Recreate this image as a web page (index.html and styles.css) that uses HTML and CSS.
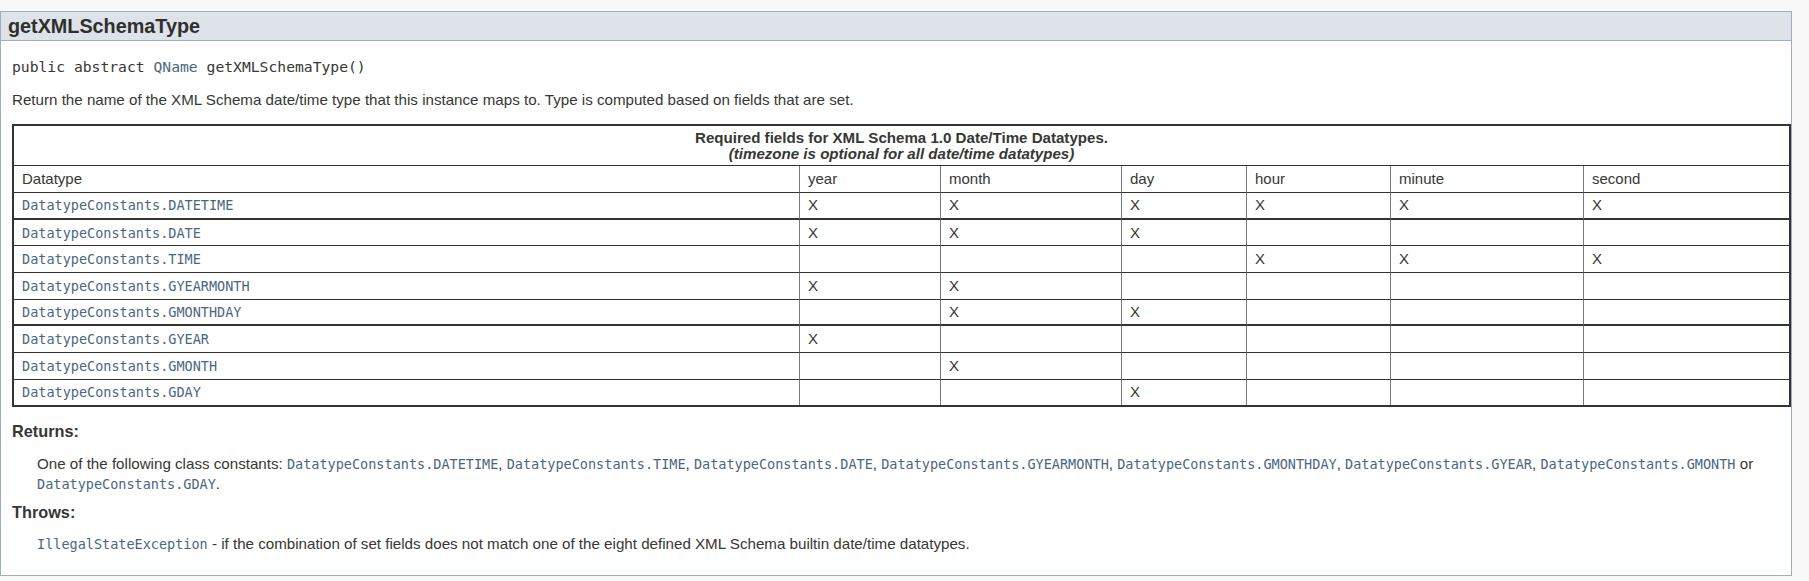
FILE: index.html
```html
<!DOCTYPE html>
<html>
<head>
<meta charset="utf-8">
<link rel="stylesheet" href="styles.css">
</head>
<body>
<div class="page">
  <section class="detail">
    <h3 class="title">getXMLSchemaType</h3>
    <div class="body">
      <div class="sig">public abstract <a class="link">QName</a> getXMLSchemaType()</div>
      <div class="desc">Return the name of the XML Schema date/time type that this instance maps to. Type is computed based on fields that are set.</div>
      <table class="req">
        <colgroup>
          <col class="c-type"><col class="c-year"><col class="c-month"><col class="c-day"><col class="c-hour"><col class="c-minute"><col class="c-second">
        </colgroup>
        <tr><th colspan="7" class="cap">Required fields for XML Schema 1.0 Date/Time Datatypes.<br><i>(timezone is optional for all date/time datatypes)</i></th></tr>
        <tr><td>Datatype</td><td>year</td><td>month</td><td>day</td><td>hour</td><td>minute</td><td>second</td></tr>
        <tr class="thick"><td><code class="link">DatatypeConstants.DATETIME</code></td><td>X</td><td>X</td><td>X</td><td>X</td><td>X</td><td>X</td></tr>
        <tr><td><code class="link">DatatypeConstants.DATE</code></td><td>X</td><td>X</td><td>X</td><td></td><td></td><td></td></tr>
        <tr><td><code class="link">DatatypeConstants.TIME</code></td><td></td><td></td><td></td><td>X</td><td>X</td><td>X</td></tr>
        <tr><td><code class="link">DatatypeConstants.GYEARMONTH</code></td><td>X</td><td>X</td><td></td><td></td><td></td><td></td></tr>
        <tr class="thick"><td><code class="link">DatatypeConstants.GMONTHDAY</code></td><td></td><td>X</td><td>X</td><td></td><td></td><td></td></tr>
        <tr><td><code class="link">DatatypeConstants.GYEAR</code></td><td>X</td><td></td><td></td><td></td><td></td><td></td></tr>
        <tr><td><code class="link">DatatypeConstants.GMONTH</code></td><td></td><td>X</td><td></td><td></td><td></td><td></td></tr>
        <tr class="last"><td><code class="link">DatatypeConstants.GDAY</code></td><td></td><td></td><td>X</td><td></td><td></td><td></td></tr>
      </table>
      <dl class="notes">
        <dt class="first">Returns:</dt>
        <dd class="first">One of the following class constants: <code class="link">DatatypeConstants.DATETIME</code>, <code class="link">DatatypeConstants.TIME</code>, <code class="link">DatatypeConstants.DATE</code>, <code class="link">DatatypeConstants.GYEARMONTH</code>, <code class="link">DatatypeConstants.GMONTHDAY</code>, <code class="link">DatatypeConstants.GYEAR</code>, <code class="link">DatatypeConstants.GMONTH</code> or <code class="link">DatatypeConstants.GDAY</code>.</dd>
        <dt>Throws:</dt>
        <dd><code class="link">IllegalStateException</code> - if the combination of set fields does not match one of the eight defined XML Schema builtin date/time datatypes.</dd>
      </dl>
    </div>
  </section>
</div>
</body>
</html>
```

FILE: styles.css
```css
html, body {
  margin: 0;
  padding: 0;
}

body {
  background: #f8f8f8;
  font-family: "Liberation Sans", Arial, sans-serif;
  color: #353833;
}

.page {
  padding-top: 11px;
  width: 1792px;
}

.detail {
  border: 1px solid #9eadc0;
  background: #ffffff;
}

.title {
  margin: 0;
  height: 28px;
  line-height: 28px;
  padding-left: 7px;
  background: #dee3e9;
  border-bottom: 1px solid #9eadc0;
  font-size: 19.8px;
  font-weight: bold;
  color: #2f302d;
}

.body {
  padding: 0 0 20px 11px;
}

.link {
  color: #4a6782;
  text-decoration: none;
}

code {
  font-family: "DejaVu Sans Mono", monospace;
  font-size: 13.5px;
}

.sig {
  margin-top: 15.5px;
  font-family: "DejaVu Sans Mono", monospace;
  font-size: 14.7px;
  line-height: 20px;
}

.desc {
  margin-top: 13.2px;
  font-size: 15.15px;
  line-height: 20px;
}

.req {
  margin-top: 14.7px;
  width: 100%;
  table-layout: fixed;
  border-collapse: separate;
  border-spacing: 0;
  border: 2px solid #333333;
  font-size: 15px;
}

.c-type { width: 786px; }
.c-year { width: 141px; }
.c-month { width: 181px; }
.c-day { width: 125px; }
.c-hour { width: 144px; }
.c-minute { width: 193px; }

.req th.cap {
  padding: 3.5px 0 2.5px;
  line-height: 16.5px;
  text-align: center;
  font-weight: bold;
  font-size: 15.1px;
  border-bottom: 1px solid #333333;
}

.req td {
  padding: 0 8px;
  height: 25.67px;
  line-height: 18px;
  text-align: left;
  vertical-align: middle;
  white-space: nowrap;
  overflow: hidden;
  border-bottom: 1px solid #333333;
  border-right: 1px solid #7a7a7a;
}

.req td:last-child {
  border-right: 0;
}

.req tr.thick td {
  border-bottom-width: 2px;
  height: 24.67px;
}

.req tr.last td {
  border-bottom: 0;
}

.notes {
  margin: 14.2px 0 0 0;
}

.notes dt {
  margin-top: 6.8px;
  font-weight: bold;
  font-size: 16.3px;
  line-height: 20px;
}

.notes dt.first {
  margin-top: 0;
}

.notes dd {
  margin: 12.8px 0 0 25px;
  font-size: 15.15px;
  line-height: 19.4px;
}

.notes dd.first {
  margin-top: 12.5px;
}
```
